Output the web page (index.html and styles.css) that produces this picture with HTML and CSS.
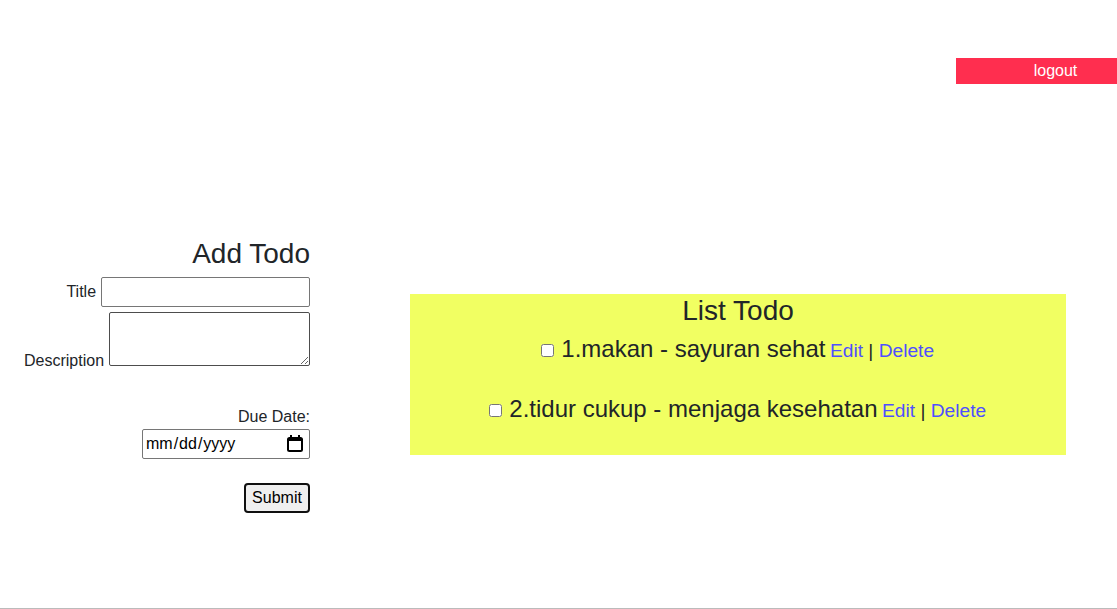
FILE: index.html
```html
<!DOCTYPE html>
<html lang="en">
<head>
<meta charset="utf-8">
<title>Todo</title>
<link rel="stylesheet" href="styles.css">
</head>
<body>
<div class="page">
  <header class="topbar">
    <a class="logout" href="#">logout</a>
  </header>
  <main class="content">
    <form class="add-form">
      <h3 class="heading add-heading">Add Todo</h3>
      <div class="field-title">
        <label for="title">Title</label>
        <input id="title" class="text-input" type="text">
      </div>
      <div class="field-desc">
        <label for="desc">Description</label>
        <textarea id="desc" class="text-area" cols="20" rows="2"></textarea>
      </div>
      <div class="field-date">
        <label class="date-label" for="due">Due Date:</label>
        <input id="due" class="date-input" type="date">
      </div>
      <button class="submit" type="button">Submit</button>
    </form>
    <section class="list">
      <h3 class="heading list-heading">List Todo</h3>
      <div class="todo">
        <input type="checkbox" class="check">
        <span class="todo-text">1.makan - sayuran sehat</span>
        <span class="actions"><a class="action" href="#">Edit</a> | <a class="action" href="#">Delete</a></span>
      </div>
      <div class="todo">
        <input type="checkbox" class="check">
        <span class="todo-text">2.tidur cukup - menjaga kesehatan</span>
        <span class="actions"><a class="action" href="#">Edit</a> | <a class="action" href="#">Delete</a></span>
      </div>
    </section>
  </main>
  <footer class="footer"></footer>
</div>
</body>
</html>
```

FILE: styles.css
```css
* { box-sizing: border-box; }
html, body { margin: 0; padding: 0; }
body {
  font-family: "Liberation Sans", Arial, sans-serif;
  font-size: 16px;
  line-height: 1.5;
  color: #212529;
  background: #fff;
}
.page {
  height: 609px;
  display: flex;
  flex-direction: column;
  overflow: hidden;
}
.topbar {
  display: flex;
  justify-content: flex-end;
  padding-top: 58px;
}
.logout {
  display: block;
  width: 161px;
  height: 26px;
  padding-left: 38px;
  line-height: 26px;
  text-align: center;
  color: #fff;
  background: #ff2e4f;
  text-decoration: none;
}
.content {
  flex: 1;
  display: flex;
  align-items: flex-start;
  gap: 100px;
  padding-top: 152px;
  height: 0;
}
.add-form {
  width: 310px;
  text-align: right;
  margin-top: 1px;
}
.heading {
  margin: 0;
  font-size: 28px;
  font-weight: 500;
  line-height: 1.2;
}
.add-heading { margin-bottom: 6.4px; }
.list-heading { margin-bottom: 3px; }
.text-input, .date-input {
  height: 30px;
  font: inherit;
  color: #000;
  padding: 1px 2px;
  border: 1px solid #767676;
  border-radius: 2px;
  background: #fff;
}
.text-input { width: 209px; }
.date-input { width: 168px; padding-left: 2px; }
.date-input::-webkit-calendar-picker-indicator {
  width: 16px;
  height: 17px;
  padding: 0;
  margin: 0 4px 0 0;
  background: url("data:image/svg+xml,%3Csvg xmlns='http://www.w3.org/2000/svg' width='16' height='17' viewBox='0 0 16 17'%3E%3Crect x='1' y='3' width='14' height='13' rx='1.5' fill='none' stroke='%23000' stroke-width='2'/%3E%3Crect x='1' y='3' width='14' height='3' fill='%23000'/%3E%3Crect x='3' y='0' width='2' height='3' fill='%23000'/%3E%3Crect x='11' y='0' width='2' height='3' fill='%23000'/%3E%3C/svg%3E") no-repeat center;
}
label { margin-right: 0.5px; }
.field-title { height: 35px; }
.field-desc { height: 93px; }
.text-area {
  width: 201px;
  height: 54px;
  font: inherit;
  padding: 2px;
  margin: 0;
  border: 1px solid #4d4d4d;
  border-radius: 2px;
  background: #fff;
}
.date-label { display: block; margin-right: 0; }
.field-date { margin-bottom: 24px; }
.submit {
  display: inline-block;
  width: 66px;
  height: 30px;
  padding: 1px 6px;
  font: inherit;
  color: #000;
  background: #efefef;
  border: 2px solid #101010;
  border-radius: 4px;
}
.list {
  width: 656px;
  height: 161px;
  margin-top: 58px;
  text-align: center;
  background: #f1ff62;
}
.todo { height: 60px; }
.check { margin: 0 3px 0 -1px; width: 13px; height: 13px; }
.todo-text { font-size: 24px; }
.actions { font-size: 19.2px; }
.action {
  color: #4f4fff;
  text-decoration: none;
}
.footer {
  height: 1px;
  background: #bbb;
}
```
